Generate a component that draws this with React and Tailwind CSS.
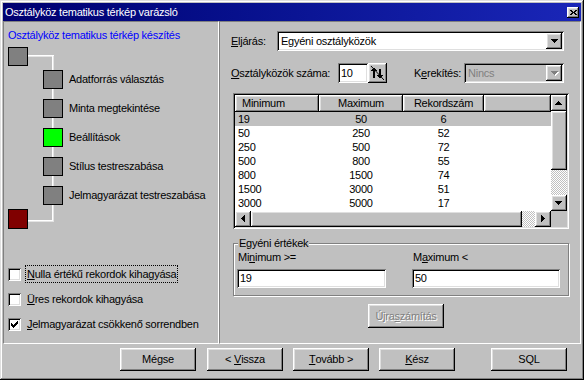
import React from 'react';

const raised = 'shadow-[inset_-1px_-1px_#000,inset_1px_1px_#fff,inset_-2px_-2px_#808080,inset_2px_2px_#dfdfdf]';
const sunken = 'shadow-[inset_1px_1px_#808080,inset_-1px_-1px_#fff,inset_2px_2px_#000,inset_-2px_-2px_#dfdfdf]';
const checker = 'bg-[image:repeating-conic-gradient(#c0c0c0_0_25%,#fff_0_50%)] bg-[length:2px_2px]';
const panel = 'border border-t-[#808080] border-l-[#808080] border-b-white border-r-white';

const arrowPaths = {
  down: 'M0 0h7v1H0zM1 1h5v1H1zM2 2h3v1H2zM3 3h1v1H3z',
  up: 'M3 0h1v1H3zM2 1h3v1H2zM1 2h5v1H1zM0 3h7v1H0z',
  left: 'M3 0h1v7H3zM2 1h1v5H2zM1 2h1v3H1zM0 3h1v1H0z',
  right: 'M0 0h1v7H0zM1 1h1v5H1zM2 2h1v3H2zM3 3h1v1H3z',
};

function Arrow({ dir, disabled }) {
  const horiz = dir === 'up' || dir === 'down';
  const w = horiz ? 7 : 4;
  const h = horiz ? 4 : 7;
  return (
    <svg width={w + 1} height={h + 1} shapeRendering="crispEdges">
      {disabled && <path d={arrowPaths[dir]} fill="#fff" transform="translate(1 1)" />}
      <path d={arrowPaths[dir]} fill={disabled ? '#808080' : '#000'} />
    </svg>
  );
}

function Btn({ children, className = '', disabled }) {
  return (
    <div className={`bg-[#c0c0c0] flex items-center justify-center whitespace-pre ${raised} ${className} ${disabled ? 'text-[#808080] [text-shadow:1px_1px_0_#fff]' : ''}`}>
      {children}
    </div>
  );
}

function Combo({ text, disabled, width }) {
  return (
    <div className={`${width} h-[20px] p-[2px] flex ${sunken} ${disabled ? 'bg-[#c0c0c0]' : 'bg-white'}`}>
      <div className={`flex-1 flex items-center pl-[2px] ${disabled ? 'text-[#808080]' : ''}`}>{text}</div>
      <div className={`w-[16px] h-full bg-[#c0c0c0] flex items-center justify-center pl-px ${raised}`}>
        <Arrow dir="down" disabled={disabled} />
      </div>
    </div>
  );
}

function Check({ children, checked, focus }) {
  return (
    <div className="flex items-center h-[18px]">
      <div className={`w-[13px] h-[13px] bg-white flex items-center justify-center ${sunken}`}>
        {checked && (
          <svg width="7" height="7" shapeRendering="crispEdges">
            <path d="M6 0h1v1H6zM5 1h2v1H5zM0 2h1v1H0zM4 2h3v1H4zM0 3h2v1H0zM3 3h3v1H3zM0 4h5v1H0zM1 5h3v1H1zM2 6h1v1H2z" fill="#000" />
          </svg>
        )}
      </div>
      <span className={`ml-[4px] px-px h-[18px] flex items-center border border-dotted ${focus ? 'border-black' : 'border-transparent'}`}>
        {children}
      </span>
    </div>
  );
}

const steps = [
  { label: 'Adatforrás választás', color: 'bg-[#808080]' },
  { label: 'Minta megtekintése', color: 'bg-[#808080]' },
  { label: 'Beállítások', color: 'bg-[#00ff00]' },
  { label: 'Stílus testreszabása', color: 'bg-[#808080]' },
  { label: 'Jelmagyarázat testreszabása', color: 'bg-[#808080]' },
];

const rows = [
  ['19', '50', '6'],
  ['50', '250', '52'],
  ['250', '500', '72'],
  ['500', '800', '55'],
  ['800', '1500', '74'],
  ['1500', '3000', '51'],
  ['3000', '5000', '17'],
];

function LeftPanel() {
  return (
    <div className={`w-[216px] pl-[4px] pt-[7px] flex flex-col ${panel}`}>
      <div className="h-[13px] text-[#0000ff]">Osztályköz tematikus térkép készítés</div>
      <div className="relative mt-[5px] flex flex-col">
        {/* tree connectors */}
        <svg className="absolute left-0 top-0 pointer-events-none" width="60" height="185" shapeRendering="crispEdges">
          <rect x="20" y="8" width="26" height="1" fill="#fff" />
          <rect x="20" y="9" width="24" height="1" fill="#e4e4e4" />
          <rect x="44" y="8" width="1" height="166" fill="#fff" />
          <rect x="45" y="9" width="1" height="165" fill="#e4e4e4" />
          <rect x="20" y="173" width="25" height="1" fill="#fff" />
          <rect x="20" y="174" width="26" height="1" fill="#e4e4e4" />
        </svg>
        <div className="relative w-[20px] h-[19px] bg-[#808080] border border-black" />
        <div className="flex flex-col gap-[10px] mt-[4px] ml-[35px]">
          {steps.map(s => (
            <div key={s.label} className="flex items-center h-[19px]">
              <div className={`relative w-[20px] h-[19px] border border-black ${s.color}`} />
              <span className="ml-[6px]">{s.label}</span>
            </div>
          ))}
        </div>
        <div className="relative mt-[4px] w-[20px] h-[20px] bg-[#800000] border border-black" />
      </div>
      <div className="mt-[36px] flex flex-col gap-[7px]">
        <Check focus><u>N</u>ulla értékű rekordok kihagyása</Check>
        <Check><u>Ü</u>res rekordok kihagyása</Check>
        <Check checked><u>J</u>elmagyarázat csökkenő sorrendben</Check>
      </div>
    </div>
  );
}

function ListView() {
  return (
    <div className={`ml-[2px] w-[336px] h-[136px] bg-white p-[2px] grid grid-cols-[1fr_16px] grid-rows-[1fr_16px] ${sunken}`}>
      <div className="overflow-hidden">
        <div className="flex h-[17px]">
          <div className={`w-[84px] bg-[#c0c0c0] pl-[7px] flex items-center ${raised}`}>Minimum</div>
          <div className={`w-[84px] bg-[#c0c0c0] flex items-center justify-center ${raised}`}>Maximum</div>
          <div className={`w-[81px] bg-[#c0c0c0] flex items-center justify-center ${raised}`}>Rekordszám</div>
          <div className={`flex-1 bg-[#c0c0c0] ${raised}`} />
        </div>
        {rows.map((r, i) => (
          <div key={i} className={`flex h-[14px] items-center ${i === 0 ? 'bg-[#c0c0c0]' : ''}`}>
            <div className="w-[84px] pl-[3px]">{r[0]}</div>
            <div className="w-[84px] text-center">{r[1]}</div>
            <div className="w-[81px] text-center">{r[2]}</div>
          </div>
        ))}
      </div>
      <div className="flex flex-col">
        <Btn className="h-[16px]"><Arrow dir="up" /></Btn>
        <Btn className="h-[59px]" />
        <div className={`flex-1 ${checker}`} />
        <Btn className="h-[16px]"><Arrow dir="down" /></Btn>
      </div>
      <div className="flex">
        <Btn className="w-[16px]"><Arrow dir="left" /></Btn>
        <Btn className="w-[271px]" />
        <div className={`flex-1 ${checker}`} />
        <Btn className="w-[16px]"><Arrow dir="right" /></Btn>
      </div>
      <div className="bg-[#c0c0c0]" />
    </div>
  );
}

function RightPanel() {
  return (
    <div className={`flex-1 pl-[11px] pt-[9px] flex flex-col ${panel}`}>
      <div className="flex items-center h-[20px]">
        <span className="w-[46px]"><u>E</u>ljárás:</span>
        <Combo text="Egyéni osztályközök" width="w-[287px]" />
      </div>
      <div className="flex items-center h-[20px] mt-[12px]">
        <span className="w-[107px]"><u>O</u>sztályközök száma:</span>
        <div className={`w-[30px] h-[20px] bg-white pl-[3px] flex items-center ${sunken}`}>10</div>
        <Btn className="w-[19px] h-[20px]">
          <svg width="19" height="20" shapeRendering="crispEdges">
            <path d="M3 3L16 17" stroke="#000" strokeWidth="1" shapeRendering="auto" />
            <path d="M5 7h2v8H5z M3 7h6v1H3z M4 6h4v1H4z M5 5h2v1H5z" fill="#000" />
            <path d="M11 6h2v7h-2z M9 12h6v1H9z M10 13h4v1h-4z M11 14h2v1h-2z" fill="#000" />
          </svg>
        </Btn>
        <span className="ml-[27px] w-[50px]">K<u>e</u>rekítés:</span>
        <Combo text="Nincs" disabled width="w-[100px]" />
      </div>
      <div className="mt-[10px]">
        <ListView />
      </div>
      <div className="mt-[14px] ml-[2px] w-[336px] flex flex-col pl-[3px] pb-[7px] border border-[#808080] shadow-[inset_1px_1px_#fff,1px_1px_#fff]">
        <span className="-mt-[7px] ml-[1px] self-start h-[13px] px-px bg-[#c0c0c0]">Egyéni értékek</span>
        <div className="flex mt-px">
          <div className="w-[149px]">
            <div className="h-[13px] pl-px">Mi<u>n</u>imum &gt;=</div>
            <div className={`mt-[5px] h-[19px] bg-white pl-[3px] flex items-center ${sunken}`}>19</div>
          </div>
          <div className="w-[148px] ml-[26px]">
            <div className="h-[13px] pl-px">M<u>a</u>ximum &lt;</div>
            <div className={`mt-[5px] h-[19px] bg-white pl-[3px] flex items-center ${sunken}`}>50</div>
          </div>
        </div>
      </div>
      <Btn disabled className="mt-[8px] ml-[137px] w-[76px] h-[24px]">Újra<u>s</u>zámítás</Btn>
    </div>
  );
}

export default function App() {
  return (
    <div className="w-[584px] h-[380px] bg-[#c0c0c0] p-[3px] flex flex-col font-['Liberation_Sans',Arial,sans-serif] text-[11px] leading-[13px] tracking-[-0.25px] text-black shadow-[inset_-1px_-1px_#000,inset_1px_1px_#dfdfdf,inset_-2px_-2px_#808080,inset_2px_2px_#fff]">
      <div className="h-[18px] flex items-center justify-between pl-[2px] pr-[2px] bg-linear-to-r from-[#000070] to-[#1a26b8]">
        <span className="text-white">Osztályköz tematikus térkép varázsló</span>
        <Btn className="w-[12px] h-[11px]">
          <svg width="7" height="5" shapeRendering="crispEdges">
            <path d="M0 0h2v1H0zM5 0h2v1H5zM1 1h2v1H1zM4 1h2v1H4zM2 2h3v1H2zM1 3h2v1H1zM4 3h2v1H4zM0 4h2v1H0zM5 4h2v1H5z" fill="#000" />
          </svg>
        </Btn>
      </div>
      <div className="flex h-[323px]">
        <LeftPanel />
        <RightPanel />
      </div>
      <div className="flex-1 flex items-start pt-[4px] pl-[117px]">
        <Btn className="w-[76px] h-[23px]">Mégse</Btn>
        <Btn className="w-[76px] h-[23px] ml-[11px]">{'< '}<u>V</u>issza</Btn>
        <Btn className="w-[76px] h-[23px] ml-[10px]"><u>T</u>ovább{' >'}</Btn>
        <Btn className="w-[76px] h-[23px] ml-[10px]"><u>K</u>ész</Btn>
        <Btn className="w-[76px] h-[23px] ml-[36px]">SQL</Btn>
      </div>
    </div>
  );
}
